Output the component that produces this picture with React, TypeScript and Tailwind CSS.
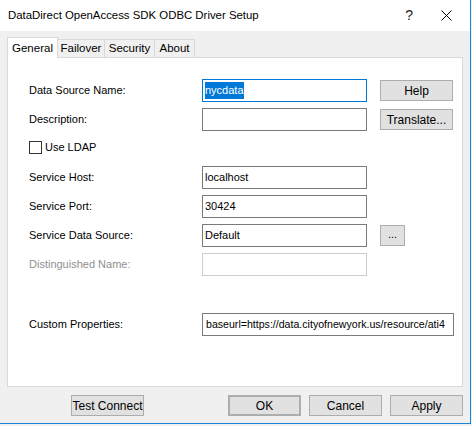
import React from "react";

const ui = { fontFamily: '"Liberation Sans", Arial, sans-serif' };

function Btn({ label, className = "" }: { label: string; className?: string }) {
  return (
    <div
      className={
        "flex h-[21px] w-[73px] shrink-0 items-center justify-center border border-[#adadad] bg-[#e1e1e1] text-[12px] text-black " +
        className
      }
    >
      {label}
    </div>
  );
}

function Row({ label, disabled, children }: { label: string; disabled?: boolean; children: React.ReactNode }) {
  return (
    <div className="flex h-[23px] items-center">
      <div className={"w-[173px] shrink-0 text-[11px] " + (disabled ? "text-[#8f8f8f]" : "text-black")}>{label}</div>
      {children}
    </div>
  );
}

function Field({ value, disabled }: { value?: string; disabled?: boolean }) {
  return (
    <div
      className={
        "flex h-[23px] w-[165px] shrink-0 items-center overflow-hidden whitespace-nowrap border bg-white px-[2px] text-[11px] text-black " +
        (disabled ? "border-[#cccccc]" : "border-[#7a7a7a]")
      }
    >
      {value}
    </div>
  );
}

export default function App() {
  return (
    <div className="h-[426px] w-[472px] overflow-hidden bg-[#f0f0f0]" style={ui}>
      <div className="flex h-[424px] w-[471px] flex-col border-r border-b border-[#1883d7] bg-[#f0f0f0]">
        <div className="flex h-[31px] shrink-0 items-center bg-white">
          <span className="pl-[8px] text-[11.4px] text-black">DataDirect OpenAccess SDK ODBC Driver Setup</span>
          <span className="ml-auto mr-[28px] text-[14px] text-[#222222]">?</span>
          <svg width="11" height="11" viewBox="0 0 11 11" className="mr-[18px]">
            <path d="M0.5 0.5 L10.5 10.5 M10.5 0.5 L0.5 10.5" stroke="#000" strokeWidth="1" />
          </svg>
        </div>

        <div className="ml-[7px] mt-[6px] flex h-[20px] items-end text-[11.5px] text-black">
          <div className="relative z-10 -mb-px flex h-[21px] w-[51px] items-start justify-center border border-b-0 border-[#d9d9d9] bg-white pt-[2px]">
            General
          </div>
          <div className="flex h-[18px] w-[47px] items-center justify-center border border-l-0 border-b-0 border-[#d9d9d9]">
            Failover
          </div>
          <div className="flex h-[18px] w-[50px] items-center justify-center border border-l-0 border-b-0 border-[#d9d9d9]">
            Security
          </div>
          <div className="flex h-[18px] w-[40px] items-center justify-center border border-l-0 border-b-0 border-[#d9d9d9]">
            About
          </div>
        </div>

        <div className="ml-[7px] flex h-[330px] w-[456px] flex-col gap-[6px] border border-[#d9d9d9] bg-white pl-[21px] pt-[21px]">
          <Row label="Data Source Name:">
            <div className="flex h-[23px] w-[165px] shrink-0 items-center border border-[#0078d7] bg-white px-[2px] text-[11px]">
              <span className="bg-[#0078d7] text-white">nycdata</span>
            </div>
            <Btn label="Help" className="ml-[13px]" />
          </Row>
          <Row label="Description:">
            <Field />
            <Btn label="Translate..." className="ml-[13px]" />
          </Row>
          <div className="-mt-[1px] mb-[1px] flex h-[23px] items-center gap-[3px] text-[11px]">
            <div className="h-[13px] w-[13px] border border-[#333333] bg-white" />
            <span>Use LDAP</span>
          </div>
          <Row label="Service Host:">
            <Field value="localhost" />
          </Row>
          <Row label="Service Port:">
            <Field value="30424" />
          </Row>
          <Row label="Service Data Source:">
            <Field value="Default" />
            <div className="ml-[13px] flex h-[21px] w-[25px] items-center justify-center border border-[#adadad] bg-[#e1e1e1] pb-[3px] text-[11px]">
              ...
            </div>
          </Row>
          <Row label="Distinguished Name:" disabled>
            <Field disabled />
          </Row>
          <div className="mt-[31px]">
            <Row label="Custom Properties:">
              <div className="flex h-[23px] w-[252px] shrink-0 items-center overflow-hidden whitespace-nowrap border border-[#7a7a7a] bg-white px-[3px] text-[10.6px]">
                baseurl=https://data.cityofnewyork.us/resource/ati4
              </div>
            </Row>
          </div>
        </div>

        <div className="mt-[8px] flex">
          <Btn label="Test Connect" className="ml-[71px]" />
          <Btn label="OK" className="ml-[84px] border-2 border-[#0078d7]" />
          <Btn label="Cancel" className="ml-[8px]" />
          <Btn label="Apply" className="ml-[8px]" />
        </div>
      </div>
    </div>
  );
}
